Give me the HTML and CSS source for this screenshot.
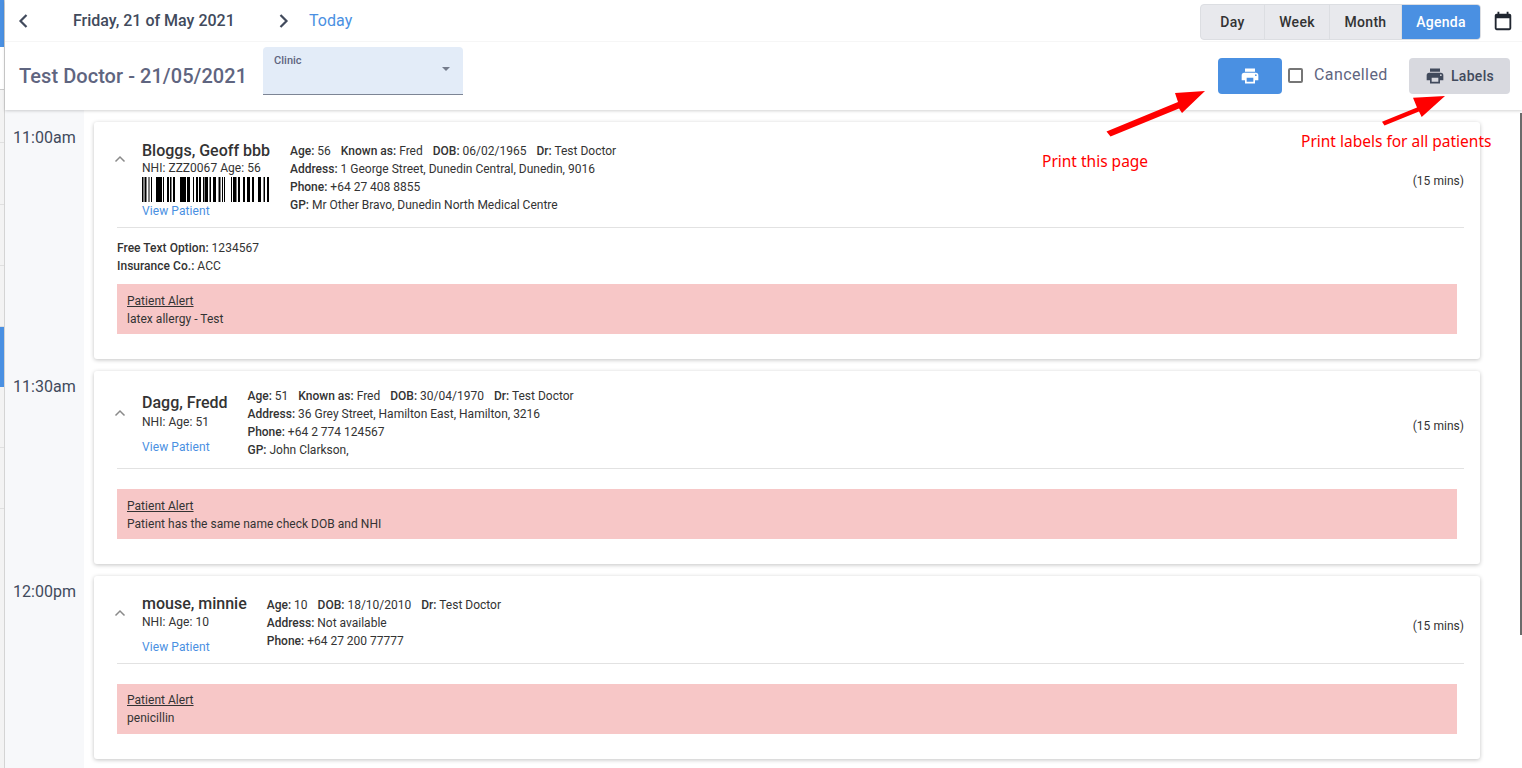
FILE: index.html
```html
<!DOCTYPE html>
<html lang="en">
<head>
<meta charset="utf-8">
<title>Agenda</title>
<link rel="stylesheet" href="styles.css">
</head>
<body>
<div class="app">
  <aside class="rail">
    <div class="rail-item rail-active rail-first"></div>
    <div class="rail-item rail-white"></div>
    <div class="rail-item rail-h53"></div>
    <div class="rail-item rail-h62"></div>
    <div class="rail-item"></div>
    <div class="rail-item"></div>
    <div class="rail-item rail-active rail-blue2"></div>
    <div class="rail-item"></div>
    <div class="rail-item"></div>
  </aside>
  <main class="main">
    <header class="head">
      <div class="nav-row">
        <svg class="chev chev-l" viewBox="0 0 12 16"><path d="M9.5 2 3.500 8l6 6" /></svg>
        <span class="date">Friday, 21 of May 2021</span>
        <svg class="chev chev-r" viewBox="0 0 12 16"><path d="M2.500 2l6 6-6 6" /></svg>
        <a class="today">Today</a>
        <div class="views">
          <span class="view view-day">Day</span>
          <span class="view view-week">Week</span>
          <span class="view view-month">Month</span>
          <span class="view view-on">Agenda</span>
        </div>
        <svg class="cal" viewBox="0 0 24 24"><path d="M19 4h-1V2h-2v2H8V2H6v2H5a2 2 0 0 0-2 2v14a2 2 0 0 0 2 2h14a2 2 0 0 0 2-2V6a2 2 0 0 0-2-2zm0 16H5V9h14v11z"/></svg>
      </div>
      <div class="title-row">
        <h1 class="title">Test Doctor - 21/05/2021</h1>
        <div class="select">
          <span class="select-label">Clinic</span>
          <span class="caret"></span>
        </div>
        <button class="btn btn-print"><svg class="ico" viewBox="0 0 24 24"><path d="M19 8H5a3 3 0 0 0-3 3v6h4v4h12v-4h4v-6a3 3 0 0 0-3-3zm-3 11H8v-5h8v5zm3-7a1 1 0 1 1 0-2 1 1 0 0 1 0 2zM18 3H6v4h12V3z"/></svg></button>
        <span class="check"></span>
        <span class="check-text">Cancelled</span>
        <button class="btn btn-labels"><svg class="ico" viewBox="0 0 24 24"><path d="M19 8H5a3 3 0 0 0-3 3v6h4v4h12v-4h4v-6a3 3 0 0 0-3-3zm-3 11H8v-5h8v5zm3-7a1 1 0 1 1 0-2 1 1 0 0 1 0 2zM18 3H6v4h12V3z"/></svg>Labels</button>
      </div>
    </header>
    <section class="agenda">
      <div class="slot slot-a">
        <div class="time">11:00am</div>
        <article class="card card-a">
          <div class="top top-a">
            <svg class="up" viewBox="0 0 12 8"><path d="M1.500 6.500 6 2l4.500 4.500"/></svg>
            <div class="who">
              <div class="name">Bloggs, Geoff bbb</div>
              <div class="nhi">NHI: ZZZ0067 Age: 56</div>
              <svg class="barcode" viewBox="0 0 127 25" preserveAspectRatio="none"><path d="M0 0h1.500v25H0zM2.500 0h2v25h-2zM6.500 0h1v25h-1zM9 0h1v25H9zM14 0h6v25h-6zM21 0h1v25h-1zM25 0h2v25h-2zM28 0h1.500v25H28zM31 0h2v25h-2zM38 0h6v25h-6zM45 0h3v25h-3zM51 0h1v25h-1zM54 0h2v25h-2zM57 0h2v25h-2zM61 0h1.500v25H61zM63 0h3v25h-3zM67.500 0h1.500v25h-1.500zM71 0h3v25h-3zM76.500 0h2v25h-2zM80 0h1v25h-1zM82 0h1v25h-1zM89 0h1v25h-1zM91 0h3.500v25H91zM96 0h2v25h-2zM101 0h2v25h-2zM105 0h3v25h-3zM110 0h2v25h-2zM116 0h3v25h-3zM121.500 0h1.500v25h-1.500zM125 0h2v25h-2z"/></svg>
              <a class="link link-a">View Patient</a>
            </div>
            <div class="info">
              <div><b>Age:</b> 56<b class="gap">Known as:</b> Fred<b class="gap">DOB:</b> 06/02/1965<b class="gap">Dr:</b> Test Doctor</div>
              <div><b>Address:</b> 1 George Street, Dunedin Central, Dunedin, 9016</div>
              <div><b>Phone:</b> +64 27 408 8855</div>
              <div><b>GP:</b> Mr Other Bravo, Dunedin North Medical Centre</div>
            </div>
            <div class="mins">(15 mins)</div>
          </div>
          <div class="extra">
            <div><b>Free Text Option:</b> 1234567</div>
            <div><b>Insurance Co.:</b> ACC</div>
          </div>
          <div class="alert alert-a">
            <div class="alert-title">Patient Alert</div>
            <div>latex allergy - Test</div>
          </div>
        </article>
      </div>
      <div class="slot slot-b">
        <div class="time">11:30am</div>
        <article class="card card-b">
          <div class="top top-b">
            <svg class="up" viewBox="0 0 12 8"><path d="M1.500 6.500 6 2l4.500 4.500"/></svg>
            <div class="who">
              <div class="name">Dagg, Fredd</div>
              <div class="nhi">NHI: Age: 51</div>
              <a class="link">View Patient</a>
            </div>
            <div class="info">
              <div><b>Age:</b> 51<b class="gap">Known as:</b> Fred<b class="gap">DOB:</b> 30/04/1970<b class="gap">Dr:</b> Test Doctor</div>
              <div><b>Address:</b> 36 Grey Street, Hamilton East, Hamilton, 3216</div>
              <div><b>Phone:</b> +64 2 774 124567</div>
              <div><b>GP:</b> John Clarkson,</div>
            </div>
            <div class="mins">(15 mins)</div>
          </div>
          <div class="alert alert-b">
            <div class="alert-title">Patient Alert</div>
            <div>Patient has the same name check DOB and NHI</div>
          </div>
        </article>
      </div>
      <div class="slot slot-c">
        <div class="time">12:00pm</div>
        <article class="card card-c">
          <div class="top top-c">
            <svg class="up" viewBox="0 0 12 8"><path d="M1.500 6.500 6 2l4.500 4.500"/></svg>
            <div class="who">
              <div class="name">mouse, minnie</div>
              <div class="nhi">NHI: Age: 10</div>
              <a class="link">View Patient</a>
            </div>
            <div class="info">
              <div><b>Age:</b> 10<b class="gap">DOB:</b> 18/10/2010<b class="gap">Dr:</b> Test Doctor</div>
              <div><b>Address:</b> Not available</div>
              <div><b>Phone:</b> +64 27 200 77777</div>
            </div>
            <div class="mins">(15 mins)</div>
          </div>
          <div class="alert alert-c">
            <div class="alert-title">Patient Alert</div>
            <div>penicillin</div>
          </div>
        </article>
      </div>
    </section>
  </main>
</div>
<div class="scroll-line"></div>
<svg class="arrow arrow-one" viewBox="0 0 110 55"><path d="M6.500 46.500 78 17 75 8l30-2-23 22-3-4.500-68.500 28z"/></svg>
<svg class="arrow arrow-two" viewBox="0 0 70 40"><path d="M2 31.700 37 17.500 33 7.700 65 6 41.700 27 39 21.500 4.500 35.500z"/></svg>
<span class="note note-one">Print this page</span>
<span class="note note-two">Print labels for all patients</span>
</body>
</html>
```
FILE: styles.css
```css
* { box-sizing: border-box; }
html, body { margin: 0; height: 768px; overflow: hidden; background: #fff; }
body { font-family: Roboto, sans-serif; color: #333; font-size: 12px; letter-spacing: .03px; }
a { text-decoration: none; }
b { font-weight: 500; }

.app { display: flex; height: 768px; }

.rail { width: 5px; flex: none; background: #f3f3f3; border-right: 1px solid #d4d4d4; }
.rail-item { height: 61px; border-bottom: 1px solid #e0e0e0; }
.rail-active { background: #4a90e2; border-bottom: 0; }
.rail-first { height: 47px; }
.rail-white { height: 43px; background: #fff; border-bottom: 1px solid #ccc; }
.rail-h53 { height: 53px; }
.rail-h62 { height: 62px; }
.rail-blue2 { height: 60px; }

.main { flex: 1; min-width: 0; display: flex; flex-direction: column; }

.head { height: 110px; flex: none; box-shadow: 0 1px 3px rgba(0,0,0,.18); position: relative; z-index: 2; background: #fff; }

.nav-row { height: 42px; display: flex; align-items: center; border-bottom: 1px solid #f6f6f6; padding-left: 12px; }
.chev { width: 12px; height: 16px; fill: none; stroke: #414a5c; stroke-width: 2.200; flex: none; margin-top: 1px; }
.chev-r { margin-left: 43px; }
.date { margin-left: 44px; font-size: 16px; font-weight: 500; color: #414a5c; width: 162px; white-space: nowrap; letter-spacing: 0; }
.today { margin-left: 19px; font-size: 16px; color: #4a90e2; }

.views { margin-left: auto; display: flex; height: 36px; margin-top: 2px; border: 1px solid #dcdee2; border-radius: 4px; background: #e8e9ed; overflow: hidden; }
.view { display: flex; align-items: center; justify-content: center; font-size: 14px; font-weight: 500; color: #333; border-right: 1px solid #dcdee2; letter-spacing: .3px; }
.view-day { width: 64px; }
.view-week { width: 65px; }
.view-month { width: 72px; }
.view-on { width: 78px; background: #4a90e2; color: #fff; border-right: 0; }
.cal { width: 22px; height: 22px; margin-left: 11px; margin-right: 8px; flex: none; fill: #202630; margin-top: 1px; }

.title-row { display: flex; align-items: flex-start; position: relative; height: 68px; padding-left: 14px; }
.title { margin: 21px 0 0; font-size: 20px; line-height: 26px; font-weight: 500; color: #5f6580; width: 244px; white-space: nowrap; letter-spacing: .05px; }
.select { position: relative; width: 200px; height: 48px; margin-top: 5px; background: #e3ecf8; border-bottom: 1px solid #7d8595; border-radius: 4px 4px 0 0; }
.select-label { position: absolute; left: 11px; top: 7px; font-size: 11px; font-weight: 500; color: #5f6580; }
.caret { position: absolute; right: 13px; top: 20px; border: 4px solid transparent; border-top-color: #757c8c; border-bottom: 0; }

.btn { display: flex; align-items: center; justify-content: center; border: 0; border-radius: 4px; font-family: inherit; height: 36px; margin-top: 16px; padding: 0; }
.ico { width: 20px; height: 20px; fill: currentColor; }
.btn-print { margin-left: auto; width: 64px; background: #4a90e2; color: #fff; }
.check { width: 15px; height: 15px; margin: 26px 0 0 6px; border: 2px solid #767676; border-radius: 2px; background: #fff; flex: none; }
.check-text { margin: 23px 0 0 11px; width: 95px; font-size: 16px; line-height: 19px; color: #5f6580; white-space: nowrap; letter-spacing: .4px; }
.btn-labels { width: 101px; margin-right: 12px; background: #d8d9df; color: #414a5c; font-size: 14px; font-weight: 500; gap: 6px; letter-spacing: .3px; }

.agenda { flex: 1; min-height: 0; background: linear-gradient(to right, #f7f8fa 79px, #fff 79px); }
.slot { display: flex; position: relative; }
.slot-a { height: 261px; }
.slot-b { height: 205px; }
.slot-c { height: 192px; }
.time { width: 89px; flex: none; padding: 18px 0 0 8px; font-size: 16px; line-height: 19px; color: #414a5c; }
.slot-b .time, .slot-c .time { padding-top: 6px; }

.card { width: 1386px; background: #fff; border-radius: 3px; box-shadow: 0 1px 4px rgba(0,0,0,.24); position: relative; padding: 0 16px 0 23px; flex: none; }
.card-a { margin-top: 12px; height: 237px; }
.card-b { height: 193px; }
.card-c { height: 183px; }

.top { display: flex; align-items: flex-start; position: relative; border-bottom: 1px solid #e2e2e2; }
.top-a { height: 106px; padding-top: 19px; }
.top-b { height: 98px; padding-top: 15px; }
.top-c { height: 88px; padding-top: 18px; }
.up { width: 12px; height: 8px; fill: none; stroke: #8a8a8a; stroke-width: 1.500; position: absolute; left: -3px; top: 33px; }
.top-b .up { top: 38px; }
.who { margin-left: 25px; margin-right: 20px; }
.top-b .who { padding-top: 7px; }
.name { font-size: 16px; line-height: 19px; font-weight: 500; color: #333; white-space: nowrap; letter-spacing: 0; }
.nhi { line-height: 18px; white-space: nowrap; }
.top-a .nhi { margin-top: -1px; }
.top-b .nhi { margin-top: 1px; }
.barcode { display: block; width: 127px; height: 25px; fill: #000; }
.link { display: block; line-height: 16px; color: #4a90e2; margin-top: 8px; white-space: nowrap; letter-spacing: .08px; }
.link-a { margin-top: 1px; }
.info { line-height: 18px; color: #333; white-space: nowrap; flex: 1; letter-spacing: 0; }
.top-a .info, .top-b .info { margin-top: 1px; }
.top-c .info { margin-top: 2px; }
.gap { margin-left: 10px; }
.mins { position: absolute; right: 0; top: 50px; line-height: 18px; }
.top-b .mins { top: 46px; }
.top-c .mins { top: 41px; }

.extra { line-height: 18px; margin-top: 11px; }
.alert { width: 1340px; height: 50px; background: #f7c7c7; padding: 8px 10px; line-height: 18px; }
.alert-a { margin-top: 9px; }
.alert-b, .alert-c { margin-top: 20px; }
.alert-c { padding-top: 7px; }
.alert-title { text-decoration: underline; }

.scroll-line { position: absolute; left: 1520px; top: 113px; width: 2px; height: 522px; background: #6b6b6b; }

.arrow { position: absolute; fill: #f00; z-index: 5; }
.arrow-one { left: 1100px; top: 85px; width: 110px; height: 55px; }
.arrow-two { left: 1380px; top: 90px; width: 70px; height: 40px; }
.note { position: absolute; z-index: 5; font-family: "Noto Sans", sans-serif; font-size: 15.500px; line-height: 20px; color: #f00; white-space: nowrap; letter-spacing: 0; }
.note-one { left: 1042px; top: 151px; }
.note-two { left: 1301px; top: 131px; }
```
